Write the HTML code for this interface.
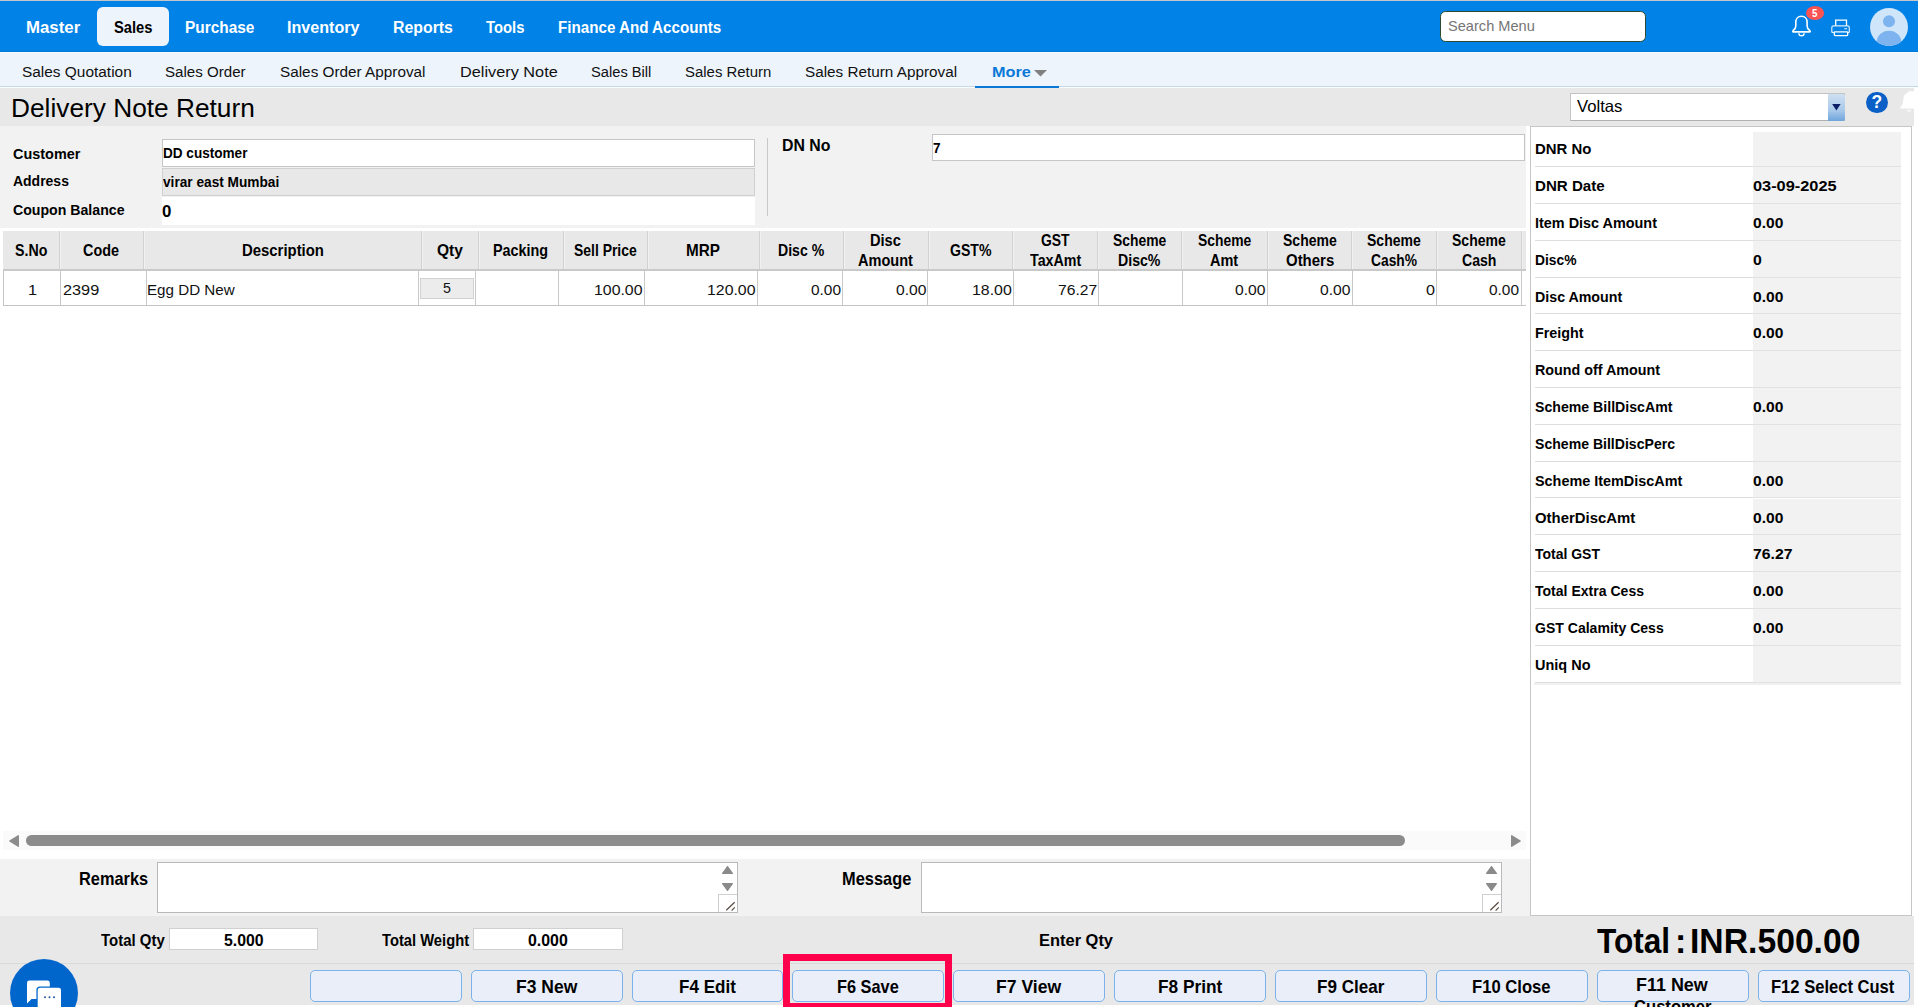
<!DOCTYPE html>
<html lang="en">
<head>
<meta charset="utf-8">
<title>Delivery Note Return</title>
<style>
html,body{margin:0;padding:0;background:#fff;}
body{width:1918px;height:1007px;overflow:hidden;position:relative;font-family:"Liberation Sans",sans-serif;}
#pg{position:absolute;left:0;top:0;width:1918px;height:1007px;overflow:hidden;background:#fff;}
#pg div,#pg span,#pg svg{position:absolute;box-sizing:border-box;}
.t{white-space:nowrap;line-height:1;font-weight:700;color:#000;transform-origin:0 0;font-family:"Liberation Sans",sans-serif;}
.hs{top:231px;width:2px;height:38px;background:linear-gradient(90deg,#d2d2d2 0 1px,#f1f1f1 1px 2px);}
.rs{top:271px;width:1px;height:34px;background:#c9c9c9;}
.pl{left:1535px;width:218px;background:#fff;border-bottom:1.5px solid #dedede;}
.pv{left:1753px;width:148px;background:#f2f2f2;border-bottom:1.5px solid #e2e2e2;}
.btn{top:970px;width:151.800px;height:31.700px;background:#e9eef9;border:1px solid #7bb1ec;border-radius:5px;}
.inp{background:#fff;border:1px solid #c6c6c6;}
</style>
</head>
<body>
<div id="pg">
<!-- top chrome -->
<div style="left:0;top:0;width:1918px;height:1px;background:#c4c6c9"></div>
<div style="left:0;top:1px;width:1918px;height:51px;background:#0082e6"></div>
<div style="left:97px;top:7px;width:72px;height:39px;border-radius:6px;background:#edf4fc"></div>
<div style="left:1440px;top:11px;width:206px;height:31px;border-radius:5.5px;background:#fff;border:1px solid #2b4a30"></div>
<!-- submenu -->
<div style="left:0;top:51px;width:1918px;height:1px;background:#0079d8"></div>
<div style="left:0;top:52px;width:1918px;height:1px;background:#f7fbff"></div>
<div style="left:0;top:53px;width:1918px;height:33px;background:#edf4fc"></div>
<div style="left:0;top:86px;width:1918px;height:1px;background:#c4d8e8"></div>
<div style="left:0;top:87px;width:1918px;height:1px;background:#fbfcfd"></div>
<div style="left:975px;top:85.7px;width:84px;height:2px;background:#0a78d8"></div>
<svg style="left:1034px;top:69.5px" width="13" height="7" viewBox="0 0 13 7"><path d="M0 0H13L6.5 6.6Z" fill="#808080"/></svg>
<!-- title bar -->
<div style="left:0;top:88px;width:1914px;height:38px;background:#e8e8e8"></div>
<!-- form block -->
<div style="left:0;top:126px;width:1526px;height:102px;background:#f2f2f2"></div>
<div class="inp" style="left:162px;top:139px;width:593px;height:27.5px"></div>
<div style="left:162px;top:168px;width:593px;height:28px;background:#e8e8e8;border:1px solid #d0d0d0"></div>
<div style="left:162px;top:197px;width:593px;height:28px;background:#fff"></div>
<div style="left:767.3px;top:138px;width:1px;height:78px;background:#c8c8c8"></div>
<div class="inp" style="left:932px;top:134px;width:592.5px;height:27px"></div>
<!-- table -->
<div id="tbl" style="left:0;top:228px;width:1526px;height:631px;overflow:hidden;background:#fff">
<div style="left:3px;top:3px;width:1530px;height:38px;background:#e8e8e8"></div>
<div style="left:3px;top:41px;width:1530px;height:2px;background:#c9c9c9"></div>
<div style="left:3px;top:43px;width:1px;height:35px;background:#c4c4c4"></div>
<div style="left:3px;top:77px;width:1530px;height:1px;background:#c4c4c4"></div>
<div style="left:420px;top:49.5px;width:53.5px;height:21px;background:#ececec;border:1px solid #d2d2d2"></div>
<div style="left:3px;top:602.6px;width:1523px;height:19.6px;background:#fafafa"></div>
<div style="left:26px;top:607px;width:1379px;height:11px;border-radius:5.5px;background:#8b8b8b"></div>
<svg style="left:8.6px;top:607px" width="10" height="12" viewBox="0 0 10 12"><path d="M9.300 0.800V11.200L0.800 6Z" fill="#8b8b8b" stroke="#8b8b8b" stroke-width="1.400" stroke-linejoin="round"/></svg>
<svg style="left:1511px;top:607px" width="10" height="12" viewBox="0 0 10 12"><path d="M0.700 0.800V11.200L9.200 6Z" fill="#8b8b8b" stroke="#8b8b8b" stroke-width="1.400" stroke-linejoin="round"/></svg>
</div>
<div class="hs" style="left:58.75px"></div>
<div class="hs" style="left:142.50px"></div>
<div class="hs" style="left:420.75px"></div>
<div class="hs" style="left:478.00px"></div>
<div class="hs" style="left:562.75px"></div>
<div class="hs" style="left:646.50px"></div>
<div class="hs" style="left:758.50px"></div>
<div class="hs" style="left:843.00px"></div>
<div class="hs" style="left:927.50px"></div>
<div class="hs" style="left:1012.00px"></div>
<div class="hs" style="left:1096.75px"></div>
<div class="hs" style="left:1181.25px"></div>
<div class="hs" style="left:1266.50px"></div>
<div class="hs" style="left:1351.25px"></div>
<div class="hs" style="left:1435.75px"></div>
<div class="hs" style="left:1521.25px"></div>
<div class="rs" style="left:59.50px"></div>
<div class="rs" style="left:145.75px"></div>
<div class="rs" style="left:417.75px"></div>
<div class="rs" style="left:475.00px"></div>
<div class="rs" style="left:557.75px"></div>
<div class="rs" style="left:643.75px"></div>
<div class="rs" style="left:756.50px"></div>
<div class="rs" style="left:842.00px"></div>
<div class="rs" style="left:927.00px"></div>
<div class="rs" style="left:1012.50px"></div>
<div class="rs" style="left:1097.50px"></div>
<div class="rs" style="left:1181.50px"></div>
<div class="rs" style="left:1267.00px"></div>
<div class="rs" style="left:1352.00px"></div>
<div class="rs" style="left:1436.00px"></div>
<div class="rs" style="left:1520.75px"></div>
<!-- remarks block -->
<div style="left:0;top:859px;width:1530px;height:57px;background:#f2f2f2"></div>
<div style="left:157px;top:862px;width:581px;height:51px;background:#fff;border:1px solid #b9b9b9"></div>
<div style="left:921px;top:862px;width:581px;height:51px;background:#fff;border:1px solid #b9b9b9"></div>
<svg style="left:722.0px;top:866.2px" width="11" height="8" viewBox="0 0 11 8"><path d="M0.600 7.400H10.400L5.500 0.600Z" fill="#8a8a8a" stroke="#8a8a8a" stroke-width="1.200" stroke-linejoin="round"/></svg>
<svg style="left:722.0px;top:883px" width="11" height="8" viewBox="0 0 11 8"><path d="M0.600 0.600H10.400L5.500 7.400Z" fill="#8a8a8a" stroke="#8a8a8a" stroke-width="1.200" stroke-linejoin="round"/></svg>
<div style="left:718.4px;top:893.7px;width:18.6px;height:18.3px;background:#fff;border:1px solid #d0d0d0;border-right:none;border-bottom:none"></div>
<svg style="left:724.4px;top:899px" width="13" height="13" viewBox="0 0 13 13"><path d="M2.300 11.300L10.600 3.300M7.600 11.600L10.800 8.400" stroke="#5a4a42" stroke-width="1.200" fill="none"/></svg>
<svg style="left:1486.0px;top:866.2px" width="11" height="8" viewBox="0 0 11 8"><path d="M0.600 7.400H10.400L5.500 0.600Z" fill="#8a8a8a" stroke="#8a8a8a" stroke-width="1.200" stroke-linejoin="round"/></svg>
<svg style="left:1486.0px;top:883px" width="11" height="8" viewBox="0 0 11 8"><path d="M0.600 0.600H10.400L5.500 7.400Z" fill="#8a8a8a" stroke="#8a8a8a" stroke-width="1.200" stroke-linejoin="round"/></svg>
<div style="left:1482.4px;top:893.7px;width:18.6px;height:18.3px;background:#fff;border:1px solid #d0d0d0;border-right:none;border-bottom:none"></div>
<svg style="left:1488.4px;top:899px" width="13" height="13" viewBox="0 0 13 13"><path d="M2.300 11.300L10.600 3.300M7.600 11.600L10.800 8.400" stroke="#5a4a42" stroke-width="1.200" fill="none"/></svg>
<!-- right panel -->
<div style="left:1530px;top:126px;width:382px;height:790px;background:#fff;border:1px solid #c6c6c6"></div>
<div class="pl" style="top:130.40px;height:36.81px"></div><div class="pv" style="top:130.40px;height:36.81px"></div>
<div class="pl" style="top:167.21px;height:36.81px"></div><div class="pv" style="top:167.21px;height:36.81px"></div>
<div class="pl" style="top:204.02px;height:36.81px"></div><div class="pv" style="top:204.02px;height:36.81px"></div>
<div class="pl" style="top:240.83px;height:36.81px"></div><div class="pv" style="top:240.83px;height:36.81px"></div>
<div class="pl" style="top:277.64px;height:36.81px"></div><div class="pv" style="top:277.64px;height:36.81px"></div>
<div class="pl" style="top:314.45px;height:36.81px"></div><div class="pv" style="top:314.45px;height:36.81px"></div>
<div class="pl" style="top:351.26px;height:36.81px"></div><div class="pv" style="top:351.26px;height:36.81px"></div>
<div class="pl" style="top:388.07px;height:36.81px"></div><div class="pv" style="top:388.07px;height:36.81px"></div>
<div class="pl" style="top:424.88px;height:36.81px"></div><div class="pv" style="top:424.88px;height:36.81px"></div>
<div class="pl" style="top:461.69px;height:36.81px"></div><div class="pv" style="top:461.69px;height:36.81px"></div>
<div class="pl" style="top:498.50px;height:36.81px"></div><div class="pv" style="top:498.50px;height:36.81px"></div>
<div class="pl" style="top:535.31px;height:36.81px"></div><div class="pv" style="top:535.31px;height:36.81px"></div>
<div class="pl" style="top:572.12px;height:36.81px"></div><div class="pv" style="top:572.12px;height:36.81px"></div>
<div class="pl" style="top:608.93px;height:36.81px"></div><div class="pv" style="top:608.93px;height:36.81px"></div>
<div class="pl" style="top:645.74px;height:36.81px"></div><div class="pv" style="top:645.74px;height:36.81px"></div>
<div style="left:1534px;top:682.55px;width:367px;height:2px;background:#f0f0f0"></div>
<div style="left:1533px;top:127px;width:370px;height:4.9px;background:#fff"></div>
<!-- bottom bar -->
<div style="left:0;top:916px;width:1914px;height:88.6px;background:#e8e8e8"></div>
<div style="left:0;top:963px;width:1914px;height:1px;background:#d9d9d9"></div>
<div class="inp" style="left:168.5px;top:928.3px;width:149px;height:22px;border-color:#d0d0d0"></div>
<div class="inp" style="left:473.4px;top:928.3px;width:149.3px;height:22px;border-color:#d0d0d0"></div>
<div class="btn" style="left:310.00px"></div>
<div class="btn" style="left:470.80px"></div>
<div class="btn" style="left:631.60px"></div>
<div class="btn" style="left:792.30px"></div>
<div class="btn" style="left:953.10px"></div>
<div class="btn" style="left:1114.10px"></div>
<div class="btn" style="left:1275.00px"></div>
<div class="btn" style="left:1436.00px"></div>
<div class="btn" style="left:1597.10px"></div>
<div class="btn" style="left:1758.00px"></div>
<div style="left:783px;top:954px;width:169px;height:56px;border:7px solid #ff004b;"></div>
<!-- bell + printer -->
<svg style="left:1780px;top:0" width="80" height="52" viewBox="0 0 80 52">
<path d="M21.450 16.300C18 16.300 15.800 18.800 15.800 22.200V26C15.800 28 14.800 29.400 13.200 30.500Q12 31.900 13.500 31.900H29.400Q30.900 31.900 29.700 30.500C28.100 29.400 27.100 28 27.100 26V22.200C27.100 18.800 24.900 16.300 21.450 16.300Z" fill="none" stroke="#fff" stroke-width="1.600" stroke-linejoin="round"/>
<path d="M18.900 33.200a2.600 2.600 0 0 0 5.200 0" fill="none" stroke="#fff" stroke-width="1.400"/>
<ellipse cx="35.050" cy="12.950" rx="9.050" ry="7.050" fill="#f95353"/>
<path d="M55.700 25.800V20.100H66.500V25.800" fill="none" stroke="#fff" stroke-width="1.300"/>
<path d="M51.800 32.400V27.600a1.800 1.800 0 0 1 1.800-1.800H67.500a1.800 1.800 0 0 1 1.800 1.800V32.400" fill="none" stroke="#fff" stroke-width="1.200" stroke-opacity="0.850"/>
<rect x="54.300" y="31.900" width="13.400" height="3.700" rx="0.800" fill="none" stroke="#fff" stroke-width="1.300"/>
<path d="M51.800 32.400H54.300M67.700 32.400H69.300" stroke="#fff" stroke-width="1.200" stroke-opacity="0.850"/>
<rect x="64.300" y="28" width="2.800" height="1.300" fill="#fff" fill-opacity="0.700"/>
</svg>
<!-- avatar -->
<div style="left:1870px;top:8px;width:38px;height:38px;border-radius:50%;overflow:hidden;background:#cfe5fa"><svg style="left:0;top:0" width="38" height="38" viewBox="0 0 38 38"><circle cx="19" cy="13.200" r="6" fill="#7db3ee"/><ellipse cx="19" cy="34.200" rx="12.300" ry="11.500" fill="#7db3ee"/></svg></div>
<!-- Voltas select -->
<div style="left:1570px;top:93px;width:275px;height:28px;background:#fff;border:1px solid #c4c4c4;border-bottom-color:#b0b0b0"></div>
<div style="left:1828px;top:93.500px;width:16.600px;height:27px;background:linear-gradient(#cfe0f2,#a9c9ea 60%,#6fa5dc);border-radius:0 2px 2px 0"></div>
<svg style="left:1832.200px;top:104.200px" width="8.800" height="6.600" viewBox="0 0 9 7"><path d="M0 0H9L4.500 7Z" fill="#0b1f66"/></svg>
<!-- help -->
<div style="left:1866.300px;top:91.500px;width:21.500px;height:21.500px;border-radius:50%;background:#0a60c6"></div>
<span class="t" style="left:1871.600px;top:93.600px;font-size:17.500px;color:#fff">?</span>
<!-- faint bell clipped -->
<svg style="left:1896px;top:90px" width="18" height="24" viewBox="0 0 18 24"><path d="M13 1.300c-0.600 0-1 0.500-1.100 1.200C9 3.500 7.500 6 7.300 9.500 7.100 13.500 6 16 3.500 18.500H18V1.300z" fill="#fff"/><path d="M10.800 19.800a2.200 2.200 0 0 0 4.400 0z" fill="#f6f6f6"/></svg>
<!-- chat bubble -->
<div style="left:10.100px;top:958.500px;width:68px;height:68px;border-radius:50%;background:#0066cc"></div>
<svg style="left:20px;top:975px" width="50" height="32" viewBox="20 975 50 32"><path d="M29.400 980.600H47.400a2.400 2.400 0 0 1 2.400 2.400V999H31.500L27 1003.400V983a2.400 2.400 0 0 1 2.400-2.400z" fill="#fff"/><rect x="36.400" y="986.400" width="25.800" height="24" rx="3.600" fill="#0066cc"/><rect x="37.700" y="987.700" width="23.300" height="22" rx="2.400" fill="#fff"/><circle cx="45" cy="997.300" r="0.950" fill="#1a4f9c"/><circle cx="49.500" cy="997.300" r="0.950" fill="#1a4f9c"/><circle cx="54" cy="997.300" r="0.950" fill="#1a4f9c"/></svg>

<span class="t" style="left:26.02px;top:17px;line-height:20px;font-size:17.2px;transform:scaleX(0.9777);color:#fff;">Master</span>
<span class="t" style="left:113.75px;top:17px;line-height:20px;font-size:17.2px;transform:scaleX(0.8567);">Sales</span>
<span class="t" style="left:185.10px;top:17px;line-height:20px;font-size:17.2px;transform:scaleX(0.8968);color:#fff;">Purchase</span>
<span class="t" style="left:287.06px;top:17px;line-height:20px;font-size:17.2px;transform:scaleX(0.9375);color:#fff;">Inventory</span>
<span class="t" style="left:393.08px;top:17px;line-height:20px;font-size:17.2px;transform:scaleX(0.9230);color:#fff;">Reports</span>
<span class="t" style="left:486.00px;top:17px;line-height:20px;font-size:17.2px;transform:scaleX(0.8637);color:#fff;">Tools</span>
<span class="t" style="left:557.62px;top:17px;line-height:20px;font-size:17.2px;transform:scaleX(0.8827);color:#fff;">Finance And Accounts</span>
<span class="t" style="left:22.00px;top:63px;line-height:17px;font-size:15.3px;transform:scaleX(1.0079);font-weight:400;color:#111;">Sales Quotation</span>
<span class="t" style="left:165.30px;top:63px;line-height:17px;font-size:15.3px;transform:scaleX(0.9875);font-weight:400;color:#111;">Sales Order</span>
<span class="t" style="left:280.10px;top:63px;line-height:17px;font-size:15.3px;transform:scaleX(1.0004);font-weight:400;color:#111;">Sales Order Approval</span>
<span class="t" style="left:459.64px;top:63px;line-height:17px;font-size:15.3px;transform:scaleX(1.0642);font-weight:400;color:#111;">Delivery Note</span>
<span class="t" style="left:591.00px;top:63px;line-height:17px;font-size:15.3px;transform:scaleX(0.9598);font-weight:400;color:#111;">Sales Bill</span>
<span class="t" style="left:685.40px;top:63px;line-height:17px;font-size:15.3px;transform:scaleX(0.9759);font-weight:400;color:#111;">Sales Return</span>
<span class="t" style="left:805.30px;top:63px;line-height:17px;font-size:15.3px;transform:scaleX(0.9990);font-weight:400;color:#111;">Sales Return Approval</span>
<span class="t" style="left:991.64px;top:63px;line-height:17px;font-size:15.3px;transform:scaleX(1.0617);color:#0a78d8;">More</span>
<span class="t" style="left:10.71px;top:94px;line-height:28px;font-size:25.1px;transform:scaleX(1.0468);font-weight:400;">Delivery Note Return</span>
<span class="t" style="left:1447.70px;top:18px;line-height:16px;font-size:14.8px;transform:scaleX(0.9866);font-weight:400;color:#757575;">Search Menu</span>
<span class="t" style="left:1576.60px;top:97px;line-height:18px;font-size:16.5px;transform:scaleX(1.0112);font-weight:400;">Voltas</span>
<span class="t" style="left:1812.40px;top:8px;line-height:11px;font-size:10.2px;transform:scaleX(0.9500);color:#fff;">5</span>
<span class="t" style="left:12.50px;top:146px;line-height:16px;font-size:14.4px;transform:scaleX(1.0034);">Customer</span>
<span class="t" style="left:12.50px;top:173px;line-height:16px;font-size:14.4px;transform:scaleX(0.9708);">Address</span>
<span class="t" style="left:12.50px;top:202px;line-height:16px;font-size:14.4px;transform:scaleX(0.9821);">Coupon Balance</span>
<span class="t" style="left:162.70px;top:145px;line-height:16px;font-size:14.4px;transform:scaleX(0.9426);">DD customer</span>
<span class="t" style="left:162.70px;top:174px;line-height:16px;font-size:14.4px;transform:scaleX(0.9500);">virar east Mumbai</span>
<span class="t" style="left:161.60px;top:202px;line-height:18px;font-size:16.5px;transform:scaleX(1.0222);">0</span>
<span class="t" style="left:781.88px;top:137px;line-height:17px;font-size:15.6px;transform:scaleX(1.0170);">DN No</span>
<span class="t" style="left:933.40px;top:140px;line-height:16px;font-size:14.5px;transform:scaleX(0.9375);">7</span>
<span class="t" style="left:14.50px;top:241px;line-height:18px;font-size:16.1px;transform:scaleX(0.8825);">S.No</span>
<span class="t" style="left:83.25px;top:241px;line-height:18px;font-size:16.1px;transform:scaleX(0.8937);">Code</span>
<span class="t" style="left:241.57px;top:241px;line-height:18px;font-size:16.1px;transform:scaleX(0.9256);">Description</span>
<span class="t" style="left:437.00px;top:241px;line-height:18px;font-size:16.1px;transform:scaleX(0.9673);">Qty</span>
<span class="t" style="left:493.36px;top:241px;line-height:18px;font-size:16.1px;transform:scaleX(0.8933);">Packing</span>
<span class="t" style="left:573.75px;top:241px;line-height:18px;font-size:16.1px;transform:scaleX(0.8653);">Sell Price</span>
<span class="t" style="left:685.80px;top:241px;line-height:18px;font-size:16.1px;transform:scaleX(0.9492);">MRP</span>
<span class="t" style="left:777.88px;top:241px;line-height:18px;font-size:16.1px;transform:scaleX(0.8744);">Disc %</span>
<span class="t" style="left:870.34px;top:231px;line-height:18px;font-size:16.1px;transform:scaleX(0.9079);">Disc</span>
<span class="t" style="left:858.25px;top:251px;line-height:18px;font-size:16.1px;transform:scaleX(0.9035);">Amount</span>
<span class="t" style="left:950.00px;top:241px;line-height:18px;font-size:16.1px;transform:scaleX(0.8761);">GST%</span>
<span class="t" style="left:1040.50px;top:231px;line-height:18px;font-size:16.1px;transform:scaleX(0.8646);">GST</span>
<span class="t" style="left:1029.50px;top:251px;line-height:18px;font-size:16.1px;transform:scaleX(0.8851);">TaxAmt</span>
<span class="t" style="left:1113.00px;top:231px;line-height:18px;font-size:16.1px;transform:scaleX(0.8620);">Scheme</span>
<span class="t" style="left:1118.37px;top:251px;line-height:18px;font-size:16.1px;transform:scaleX(0.8778);">Disc%</span>
<span class="t" style="left:1197.50px;top:231px;line-height:18px;font-size:16.1px;transform:scaleX(0.8620);">Scheme</span>
<span class="t" style="left:1210.00px;top:251px;line-height:18px;font-size:16.1px;transform:scaleX(0.9003);">Amt</span>
<span class="t" style="left:1282.50px;top:231px;line-height:18px;font-size:16.1px;transform:scaleX(0.8701);">Scheme</span>
<span class="t" style="left:1285.50px;top:251px;line-height:18px;font-size:16.1px;transform:scaleX(0.9293);">Others</span>
<span class="t" style="left:1367.00px;top:231px;line-height:18px;font-size:16.1px;transform:scaleX(0.8701);">Scheme</span>
<span class="t" style="left:1371.25px;top:251px;line-height:18px;font-size:16.1px;transform:scaleX(0.8575);">Cash%</span>
<span class="t" style="left:1451.75px;top:231px;line-height:18px;font-size:16.1px;transform:scaleX(0.8701);">Scheme</span>
<span class="t" style="left:1461.75px;top:251px;line-height:18px;font-size:16.1px;transform:scaleX(0.8761);">Cash</span>
<span class="t" style="left:28.18px;top:281px;line-height:17px;font-size:15.2px;transform:scaleX(1.0714);font-weight:400;color:#111;">1</span>
<span class="t" style="left:63.00px;top:281px;line-height:17px;font-size:15.2px;transform:scaleX(1.0723);font-weight:400;color:#111;">2399</span>
<span class="t" style="left:147.25px;top:281px;line-height:17px;font-size:15.2px;transform:scaleX(0.9993);font-weight:400;color:#111;">Egg DD New</span>
<span class="t" style="left:594.46px;top:281px;line-height:17px;font-size:15.2px;transform:scaleX(1.0443);font-weight:400;color:#111;">100.00</span>
<span class="t" style="left:706.96px;top:281px;line-height:17px;font-size:15.2px;transform:scaleX(1.0443);font-weight:400;color:#111;">120.00</span>
<span class="t" style="left:810.50px;top:281px;line-height:17px;font-size:15.2px;transform:scaleX(1.0133);font-weight:400;color:#111;">0.00</span>
<span class="t" style="left:895.50px;top:281px;line-height:17px;font-size:15.2px;transform:scaleX(1.0305);font-weight:400;color:#111;">0.00</span>
<span class="t" style="left:971.95px;top:281px;line-height:17px;font-size:15.2px;transform:scaleX(1.0462);font-weight:400;color:#111;">18.00</span>
<span class="t" style="left:1057.50px;top:281px;line-height:17px;font-size:15.2px;transform:scaleX(1.0317);font-weight:400;color:#111;">76.27</span>
<span class="t" style="left:1235.00px;top:281px;line-height:17px;font-size:15.2px;transform:scaleX(1.0305);font-weight:400;color:#111;">0.00</span>
<span class="t" style="left:1320.00px;top:281px;line-height:17px;font-size:15.2px;transform:scaleX(1.0305);font-weight:400;color:#111;">0.00</span>
<span class="t" style="left:1425.75px;top:281px;line-height:17px;font-size:15.2px;transform:scaleX(1.0625);font-weight:400;color:#111;">0</span>
<span class="t" style="left:1489.25px;top:281px;line-height:17px;font-size:15.2px;transform:scaleX(1.0133);font-weight:400;color:#111;">0.00</span>
<span class="t" style="left:443.00px;top:279px;line-height:17px;font-size:15.2px;transform:scaleX(0.9375);font-weight:400;color:#111;">5</span>
<span class="t" style="left:1535.20px;top:141px;line-height:16px;font-size:14.4px;transform:scaleX(1.0372);">DNR No</span>
<span class="t" style="left:1535.20px;top:178px;line-height:16px;font-size:14.4px;transform:scaleX(1.0503);">DNR Date</span>
<span class="t" style="left:1753.40px;top:178px;line-height:16px;font-size:14.4px;transform:scaleX(1.1357);">03-09-2025</span>
<span class="t" style="left:1535.20px;top:215px;line-height:16px;font-size:14.4px;transform:scaleX(1.0013);">Item Disc Amount</span>
<span class="t" style="left:1753.40px;top:215px;line-height:16px;font-size:14.4px;transform:scaleX(1.0820);">0.00</span>
<span class="t" style="left:1535.20px;top:252px;line-height:16px;font-size:14.4px;transform:scaleX(0.9609);">Disc%</span>
<span class="t" style="left:1753.40px;top:252px;line-height:16px;font-size:14.4px;transform:scaleX(1.1000);">0</span>
<span class="t" style="left:1535.20px;top:289px;line-height:16px;font-size:14.4px;transform:scaleX(0.9881);">Disc Amount</span>
<span class="t" style="left:1753.40px;top:289px;line-height:16px;font-size:14.4px;transform:scaleX(1.0820);">0.00</span>
<span class="t" style="left:1535.20px;top:325px;line-height:16px;font-size:14.4px;transform:scaleX(0.9965);">Freight</span>
<span class="t" style="left:1753.40px;top:325px;line-height:16px;font-size:14.4px;transform:scaleX(1.0820);">0.00</span>
<span class="t" style="left:1535.20px;top:362px;line-height:16px;font-size:14.4px;transform:scaleX(0.9938);">Round off Amount</span>
<span class="t" style="left:1535.20px;top:399px;line-height:16px;font-size:14.4px;transform:scaleX(0.9817);">Scheme BillDiscAmt</span>
<span class="t" style="left:1753.40px;top:399px;line-height:16px;font-size:14.4px;transform:scaleX(1.0820);">0.00</span>
<span class="t" style="left:1535.20px;top:436px;line-height:16px;font-size:14.4px;transform:scaleX(0.9778);">Scheme BillDiscPerc</span>
<span class="t" style="left:1535.20px;top:473px;line-height:16px;font-size:14.4px;transform:scaleX(1.0009);">Scheme ItemDiscAmt</span>
<span class="t" style="left:1753.40px;top:473px;line-height:16px;font-size:14.4px;transform:scaleX(1.0820);">0.00</span>
<span class="t" style="left:1535.20px;top:510px;line-height:16px;font-size:14.4px;transform:scaleX(1.0354);">OtherDiscAmt</span>
<span class="t" style="left:1753.40px;top:510px;line-height:16px;font-size:14.4px;transform:scaleX(1.0820);">0.00</span>
<span class="t" style="left:1535.20px;top:546px;line-height:16px;font-size:14.4px;transform:scaleX(0.9717);">Total GST</span>
<span class="t" style="left:1753.40px;top:546px;line-height:16px;font-size:14.4px;transform:scaleX(1.0970);">76.27</span>
<span class="t" style="left:1535.20px;top:583px;line-height:16px;font-size:14.4px;transform:scaleX(0.9758);">Total Extra Cess</span>
<span class="t" style="left:1753.40px;top:583px;line-height:16px;font-size:14.4px;transform:scaleX(1.0820);">0.00</span>
<span class="t" style="left:1535.20px;top:620px;line-height:16px;font-size:14.4px;transform:scaleX(0.9753);">GST Calamity Cess</span>
<span class="t" style="left:1753.40px;top:620px;line-height:16px;font-size:14.4px;transform:scaleX(1.0820);">0.00</span>
<span class="t" style="left:1535.20px;top:657px;line-height:16px;font-size:14.4px;transform:scaleX(1.0061);">Uniq No</span>
<span class="t" style="left:78.78px;top:869px;line-height:20px;font-size:17.7px;transform:scaleX(0.9243);">Remarks</span>
<span class="t" style="left:842.07px;top:869px;line-height:20px;font-size:17.7px;transform:scaleX(0.9271);">Message</span>
<span class="t" style="left:101.10px;top:931px;line-height:18px;font-size:16.2px;transform:scaleX(0.9239);">Total Qty</span>
<span class="t" style="left:223.60px;top:931px;line-height:18px;font-size:16.2px;transform:scaleX(0.9776);">5.000</span>
<span class="t" style="left:381.60px;top:931px;line-height:18px;font-size:16.2px;transform:scaleX(0.9104);">Total Weight</span>
<span class="t" style="left:527.60px;top:931px;line-height:18px;font-size:16.2px;transform:scaleX(0.9801);">0.000</span>
<span class="t" style="left:1038.98px;top:931px;line-height:18px;font-size:16.2px;transform:scaleX(1.0159);">Enter Qty</span>
<span class="t" style="left:1597.10px;top:922px;line-height:38px;font-size:34.4px;transform:scaleX(0.9175);">Total</span>
<span class="t" style="left:1675.25px;top:922px;line-height:38px;font-size:34.4px;transform:scaleX(0.9833);">:</span>
<span class="t" style="left:1689.74px;top:922px;line-height:38px;font-size:34.4px;transform:scaleX(0.9799);">INR.500.00</span>
<span class="t" style="left:1471.96px;top:977px;line-height:20px;font-size:17.7px;transform:scaleX(0.9405);">F10 Close</span>
<span class="t" style="left:1636.29px;top:975px;line-height:20px;font-size:17.7px;transform:scaleX(1.0139);">F11 New</span>
<span class="t" style="left:1633.70px;top:997px;line-height:20px;font-size:17.7px;transform:scaleX(0.9386);">Customer</span>
<span class="t" style="left:1771.06px;top:977px;line-height:20px;font-size:17.7px;transform:scaleX(0.9363);">F12 Select Cust</span>
<span class="t" style="left:515.51px;top:977px;line-height:20px;font-size:17.7px;transform:scaleX(0.9891);">F3 New</span>
<span class="t" style="left:679.04px;top:977px;line-height:20px;font-size:17.7px;transform:scaleX(0.9643);">F4 Edit</span>
<span class="t" style="left:837.08px;top:977px;line-height:20px;font-size:17.7px;transform:scaleX(0.9239);">F6 Save</span>
<span class="t" style="left:996.00px;top:977px;line-height:20px;font-size:17.7px;transform:scaleX(0.9956);">F7 View</span>
<span class="t" style="left:1157.52px;top:977px;line-height:20px;font-size:17.7px;transform:scaleX(0.9776);">F8 Print</span>
<span class="t" style="left:1316.54px;top:977px;line-height:20px;font-size:17.7px;transform:scaleX(0.9649);">F9 Clear</span>
</div>
</body>
</html>
